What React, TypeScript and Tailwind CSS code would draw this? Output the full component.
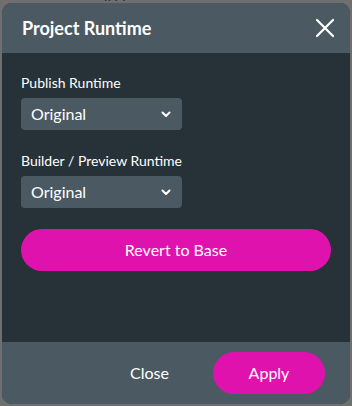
import React from "react";

function Chevron() {
  return (
    <svg width="12" height="12" viewBox="0 0 12 12" fill="none">
      <path d="M2.5 4.5 L6 8 L9.5 4.5" stroke="white" strokeWidth="2" strokeLinecap="round" strokeLinejoin="round" />
    </svg>
  );
}

function Select({ value }: { value: string }) {
  return (
    <div className="flex h-[32px] w-[161px] items-center justify-between rounded-[4px] bg-[#4b5a62] pl-[10px] pr-[10px]">
      <span className="text-[16px] text-white">{value}</span>
      <Chevron />
    </div>
  );
}

export default function App() {
  return (
    <div
      className="relative h-[406px] w-[352px] overflow-hidden bg-[#6f6f6f] pt-[3px] px-[2px]"
      style={{ fontFamily: "Lato, 'Noto Sans', sans-serif" }}
    >
      <div className="absolute left-[104px] top-[-11px] text-[14px] leading-[14px] text-[#2a2a2a]">ıf A</div>
      <div className="relative flex h-[401px] w-[348px] flex-col overflow-hidden rounded-[10px] bg-[#263238]">
        <div className="flex h-[50px] items-center justify-between bg-[#4b5a62] pl-[20px] pr-[15px]">
          <span className="text-[18px] font-bold text-white">Project Runtime</span>
          <svg width="20" height="20" viewBox="0 0 20 20" fill="none">
            <path d="M2 2 L18 18 M18 2 L2 18" stroke="white" strokeWidth="2.2" strokeLinecap="round" />
          </svg>
        </div>
        <div className="flex flex-1 flex-col px-[19px] pt-[21px]">
          <label className="text-[14px] leading-[17px] text-white">Publish Runtime</label>
          <div className="mt-[7px]">
            <Select value="Original" />
          </div>
          <label className="mt-[22px] text-[14px] leading-[17px] text-white">Builder / Preview Runtime</label>
          <div className="mt-[7px]">
            <Select value="Original" />
          </div>
          <button className="mt-[21px] flex h-[42px] w-[310px] items-center justify-center rounded-full bg-[#e012ad] text-[16px] text-white">
            Revert to Base
          </button>
        </div>
        <div className="flex h-[62px] items-center justify-end bg-[#4b5a62] pr-[25px]">
          <button className="mr-[44px] text-[16px] text-white">Close</button>
          <button className="flex h-[42px] w-[112px] items-center justify-center rounded-full bg-[#e012ad] text-[16px] text-white">
            Apply
          </button>
        </div>
      </div>
    </div>
  );
}
